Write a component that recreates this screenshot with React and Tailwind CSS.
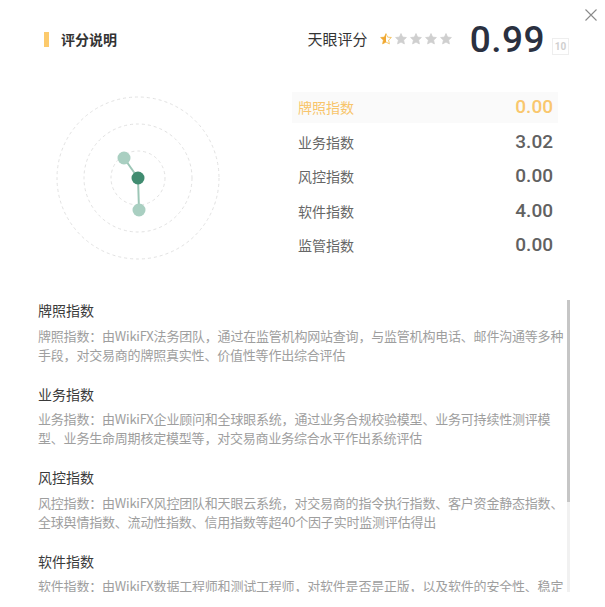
import React from "react";

const cjk = { fontFamily: '"Noto Sans CJK SC", "Noto Sans", sans-serif' };
const num = { fontFamily: 'Roboto, "Liberation Sans", sans-serif' };

const STAR = "6,0.6 7.6,4.1 11.4,4.5 8.6,7.1 9.4,10.9 6,9 2.6,10.9 3.4,7.1 0.6,4.5 4.4,4.1";

const scores = [
  { name: "牌照指数", value: "0.00", active: true },
  { name: "业务指数", value: "3.02" },
  { name: "风控指数", value: "0.00" },
  { name: "软件指数", value: "4.00" },
  { name: "监管指数", value: "0.00" },
];

const notes = [
  {
    title: "牌照指数",
    text: "牌照指数：由WikiFX法务团队，通过在监管机构网站查询，与监管机构电话、邮件沟通等多种手段，对交易商的牌照真实性、价值性等作出综合评估",
  },
  {
    title: "业务指数",
    text: "业务指数：由WikiFX企业顾问和全球眼系统，通过业务合规校验模型、业务可持续性测评模型、业务生命周期核定模型等，对交易商业务综合水平作出系统评估",
  },
  {
    title: "风控指数",
    text: "风控指数：由WikiFX风控团队和天眼云系统，对交易商的指令执行指数、客户资金静态指数、全球舆情指数、流动性指数、信用指数等超40个因子实时监测评估得出",
  },
  {
    title: "软件指数",
    text: "软件指数：由WikiFX数据工程师和测试工程师，对软件是否是正版，以及软件的安全性、稳定性等进行综合评估",
  },
];

const Stars = () => (
  <div className="flex items-center gap-[3px]">
    <svg width="12" height="12" viewBox="0 0 12 12">
      <defs>
        <clipPath id="half">
          <rect x="0" y="0" width="6" height="12" />
        </clipPath>
      </defs>
      <polygon points={STAR} fill="#fff" stroke="#f3c25e" strokeWidth="0.9" strokeLinejoin="round" />
      <polygon points={STAR} fill="#f0a732" clipPath="url(#half)" strokeLinejoin="round" />
    </svg>
    {[0, 1, 2, 3].map((i) => (
      <svg key={i} width="12" height="12" viewBox="0 0 12 12">
        <polygon points={STAR} fill="#cfcfcf" stroke="#cfcfcf" strokeWidth="0.8" strokeLinejoin="round" />
      </svg>
    ))}
  </div>
);

const Chart = () => (
  <svg width="172" height="172" viewBox="0 0 172 172" className="shrink-0">
    <g fill="none" stroke="#e2e2e2" strokeWidth="1" strokeDasharray="3 3">
      <circle cx="86" cy="86" r="81" />
      <circle cx="86" cy="86" r="54" />
      <circle cx="86" cy="86" r="27" />
    </g>
    <g stroke="#9cc6b6" strokeWidth="2">
      <line x1="86" y1="86" x2="72" y2="66" />
      <line x1="86" y1="86" x2="87" y2="118" />
    </g>
    <circle cx="72" cy="66" r="6.5" fill="#a9cfc1" />
    <circle cx="87" cy="118" r="6.5" fill="#a9cfc1" />
    <circle cx="86" cy="86" r="6.5" fill="#408c70" />
  </svg>
);

export default function App() {
  return (
    <div className="relative w-[605px] h-[607px] bg-white overflow-hidden" style={cjk}>
      <button className="absolute right-[8px] top-[9px] w-[12px] h-[12px]" aria-label="close">
        <svg width="12" height="12" viewBox="0 0 12 12">
          <path d="M0.5 0.5 L11.5 11.5 M11.5 0.5 L0.5 11.5" stroke="#8a8a8a" strokeWidth="1.1" />
        </svg>
      </button>

      <div className="flex items-center h-[34px] mt-[22px] pl-[44px] pr-[36px]">
        <span className="w-[5px] h-[15px] bg-[#fcca6c]" />
        <span className="ml-[12px] text-[14px] font-bold text-[#333]">评分说明</span>
        <div className="ml-auto flex items-center">
          <span className="text-[15px] text-[#333]">天眼评分</span>
          <div className="ml-[12px]">
            <Stars />
          </div>
          <span className="ml-[18px] text-[37px] leading-none font-medium text-[#2a3040] tracking-[0.5px]" style={num}>
            0.99
          </span>
          <span
            className="ml-[7px] mt-[15px] w-[17px] h-[17px] border border-[#eeeeee] flex items-center justify-center text-[10px] font-bold text-[#cfcfcf]"
            style={num}
          >
            10
          </span>
        </div>
      </div>

      <div className="flex items-start mt-[36px] pl-[52px]">
        <Chart />
        <div className="ml-[68px] w-[266px] flex flex-col gap-[3.5px]">
          {scores.map((s) => (
            <div
              key={s.name}
              className={`h-[31px] flex items-center justify-between pl-[6px] pr-[5px] ${s.active ? "bg-[#fafafa]" : ""}`}
            >
              <span className={`text-[14px] ${s.active ? "text-[#f8c56b]" : "text-[#666]"}`}>{s.name}</span>
              <span
                className={`text-[19px] font-medium ${s.active ? "text-[#f9c76d]" : "text-[#616161]"}`}
                style={num}
              >
                {s.value}
              </span>
            </div>
          ))}
        </div>
      </div>

      <div className="flex mt-[36px] ml-[38px] h-[292px]">
        <div className="w-[529px] overflow-hidden">
          {notes.map((n) => (
            <div key={n.title} className="mb-[20px]">
              <div className="text-[14px] leading-[20px] text-[#3a3a3a]">{n.title}</div>
              <p className="mt-[5.5px] text-[13px] leading-[19px] tracking-[-0.2px] text-[#9e9e9e]">{n.text}</p>
            </div>
          ))}
        </div>
        <div className="w-[3px] h-full bg-[#f1f1f1] flex flex-col">
          <div className="h-[202px] bg-[#c6c6c6]" />
        </div>
      </div>
    </div>
  );
}
